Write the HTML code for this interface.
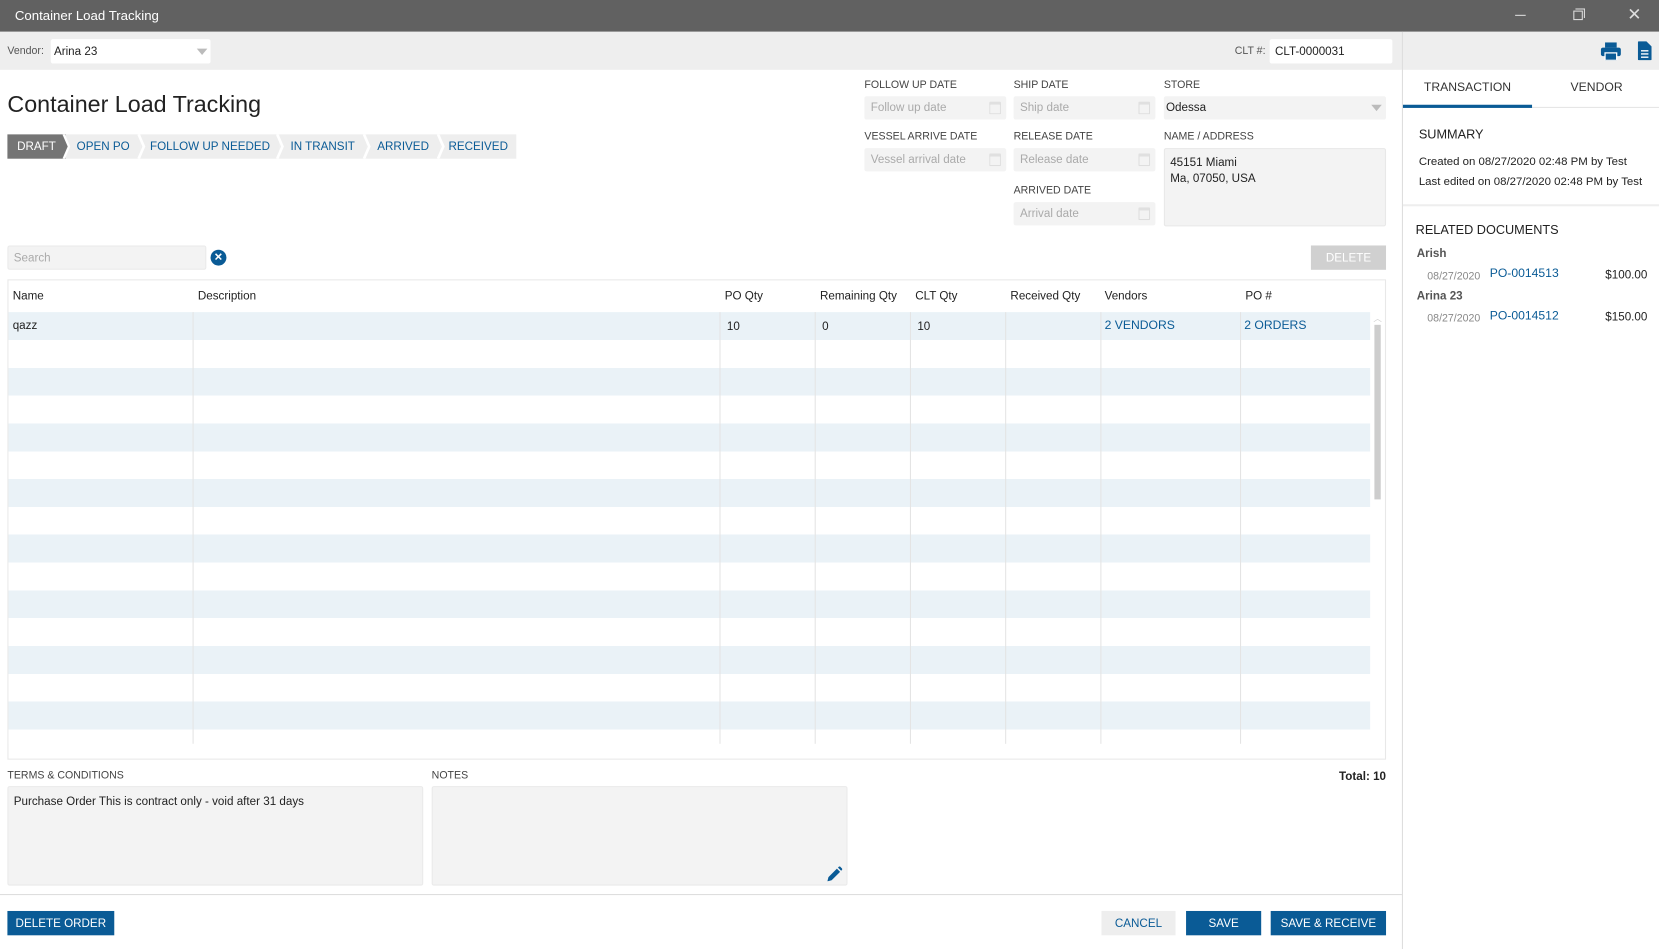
<!DOCTYPE html>
<html><head><meta charset="utf-8"><style>
*{box-sizing:border-box;margin:0;padding:0}
html,body{width:1659px;height:949px;overflow:hidden;background:#fff}
#w{position:absolute;left:0;top:0;width:1568px;height:897px;transform:scale(1.05804);transform-origin:0 0;font-family:"Liberation Sans",sans-serif;font-size:11px;color:#222}
.a{position:absolute}
.lbl{position:absolute;font-size:10px;color:#444}
.inp{position:absolute;background:#f3f3f3;border-radius:2px;color:#aaa;font-size:11px;padding-left:6px;line-height:23px}
.cal{position:absolute;right:5px;top:5px;width:11px;height:12px;border:1px solid #ddd;border-top:3px solid #e0e0e0;border-radius:1px}
.step{position:absolute;top:127px;height:23px;line-height:24px;background:#eee;color:#0a5b96;font-size:11px;text-align:center}
.btn{position:absolute;top:861px;height:23px;line-height:24px;text-align:center;font-size:11px;color:#fff;background:#0a5b96}
.vl{position:absolute;top:295px;height:408px;width:1px;background:#e4e4e4}
.th{position:absolute;top:274px;font-size:11px}
</style></head><body><div id="w">
<div class="a" style="left:0;top:0;width:1568px;height:30px;background:#616161"></div>
<div class="a" style="left:14px;top:8px;color:#fff;font-size:12.5px">Container Load Tracking</div>
<div class="a" style="left:1432px;top:14px;width:10px;height:1px;background:#ddd"></div>
<div class="a" style="left:1487px;top:10px;width:9px;height:9px;border:1px solid #ddd"></div>
<div class="a" style="left:1489px;top:8px;width:9px;height:9px;border-top:1px solid #ddd;border-right:1px solid #ddd"></div>
<div class="a" style="left:1538px;top:4px;color:#ddd;font-size:16px">✕</div>
<div class="a" style="left:0;top:30px;width:1568px;height:36px;background:#eee"></div>
<div class="a" style="left:7px;top:43px;font-size:10px;color:#555">Vendor:</div>
<div class="a" style="left:48px;top:37px;width:151px;height:23px;background:#fff;border-radius:2px;padding-left:3px;line-height:24px;font-size:11px">Arina 23</div>
<div class="a" style="left:186px;top:46px;border-left:5px solid transparent;border-right:5px solid transparent;border-top:6px solid #bbb"></div>
<div class="a" style="left:1167px;top:43px;font-size:10px;color:#555">CLT #:</div>
<div class="a" style="left:1200px;top:37px;width:116px;height:23px;background:#fff;border-radius:2px;padding-left:5px;line-height:24px;font-size:11px">CLT-0000031</div>
<svg class="a" style="left:1513px;top:40px" width="19" height="17" viewBox="0 0 19 17"><rect x="4" y="0" width="11" height="5" fill="#0a5b96"/><rect x="0" y="5" width="19" height="8" rx="2" fill="#0a5b96"/><rect x="4" y="10" width="11" height="7" fill="#0a5b96" stroke="#fff" stroke-width="1.2"/></svg>
<svg class="a" style="left:1548px;top:39px" width="13" height="18" viewBox="0 0 13 18"><path d="M0 1a1 1 0 0 1 1-1h7l5 5v12a1 1 0 0 1-1 1H1a1 1 0 0 1-1-1z" fill="#0a5b96"/><path d="M3 9h7M3 12h7M3 15h7" stroke="#fff" stroke-width="1.3"/></svg>
<div class="a" style="left:1325px;top:30px;width:1px;height:867px;background:#ddd"></div>
<div class="a" style="left:1326px;top:66px;width:242px;height:36px;border-bottom:1px solid #e4e4e4"></div>
<div class="a" style="left:1326px;top:77px;width:122px;text-align:center;font-size:11.5px;color:#333">TRANSACTION</div>
<div class="a" style="left:1448px;top:77px;width:122px;text-align:center;font-size:11.5px;color:#333">VENDOR</div>
<div class="a" style="left:1326px;top:99px;width:122px;height:3px;background:#0a5b96"></div>
<div class="a" style="left:1341px;top:120px;font-size:12px;color:#222">SUMMARY</div>
<div class="a" style="left:1341px;top:147px;font-size:10.8px;color:#222">Created on 08/27/2020 02:48 PM by Test</div>
<div class="a" style="left:1341px;top:166px;font-size:10.8px;color:#222">Last edited on 08/27/2020 02:48 PM by Test</div>
<div class="a" style="left:1326px;top:193px;width:242px;height:2px;background:#eee"></div>
<div class="a" style="left:1338px;top:210px;font-size:12px;color:#222">RELATED DOCUMENTS</div>
<div class="a" style="left:1339px;top:234px;font-size:11px;color:#555;font-weight:bold">Arish</div>
<div class="a" style="left:1349px;top:256px;font-size:10px;color:#888">08/27/2020</div>
<div class="a" style="left:1408px;top:253px;font-size:11.5px;color:#0a5b96">PO-0014513</div>
<div class="a" style="left:1480px;top:254px;width:77px;text-align:right;font-size:11px">$100.00</div>
<div class="a" style="left:1339px;top:274px;font-size:11px;color:#555;font-weight:bold">Arina 23</div>
<div class="a" style="left:1349px;top:296px;font-size:10px;color:#888">08/27/2020</div>
<div class="a" style="left:1408px;top:293px;font-size:11.5px;color:#0a5b96">PO-0014512</div>
<div class="a" style="left:1480px;top:294px;width:77px;text-align:right;font-size:11px">$150.00</div>
<div class="a" style="left:7px;top:86px;font-size:22px;color:#222">Container Load Tracking</div>
<div class="step" style="left:7px;width:55px;background:#757575;color:#fff">DRAFT</div>
<div class="step" style="left:62px;width:71px">OPEN PO</div>
<div class="step" style="left:133px;width:131px">FOLLOW UP NEEDED</div>
<div class="step" style="left:264px;width:82px">IN TRANSIT</div>
<div class="step" style="left:346px;width:70px">ARRIVED</div>
<div class="step" style="left:416px;width:72px">RECEIVED</div>
<svg class="a" style="left:0;top:127px" width="500" height="23"><g fill="none" stroke="#fff" stroke-width="2.5"><path d="M60 0l5 11.5-5 11.5M131 0l5 11.5-5 11.5M262 0l5 11.5-5 11.5M344 0l5 11.5-5 11.5M414 0l5 11.5-5 11.5"/></g><path d="M59 0l5 11.5-5 11.5z" fill="#757575"/></svg>
<div class="lbl" style="left:817px;top:75px">FOLLOW UP DATE</div>
<div class="inp" style="left:817px;top:91px;width:134px;height:22px">Follow up date<div class="cal"></div></div>
<div class="lbl" style="left:958px;top:75px">SHIP DATE</div>
<div class="inp" style="left:958px;top:91px;width:134px;height:22px">Ship date<div class="cal"></div></div>
<div class="lbl" style="left:1100px;top:75px">STORE</div>
<div class="inp" style="left:1100px;top:91px;width:210px;height:22px;color:#222;padding-left:2px">Odessa</div>
<div class="a" style="left:1296px;top:99px;border-left:5px solid transparent;border-right:5px solid transparent;border-top:6px solid #bbb"></div>
<div class="lbl" style="left:817px;top:124px">VESSEL ARRIVE DATE</div>
<div class="inp" style="left:817px;top:140px;width:134px;height:22px">Vessel arrival date<div class="cal"></div></div>
<div class="lbl" style="left:958px;top:124px">RELEASE DATE</div>
<div class="inp" style="left:958px;top:140px;width:134px;height:22px">Release date<div class="cal"></div></div>
<div class="lbl" style="left:1100px;top:124px">NAME / ADDRESS</div>
<div class="inp" style="left:1100px;top:140px;width:210px;height:74px;color:#222;line-height:15px;padding-top:6px;padding-left:5px;border:1px solid #e8e8e8">45151 Miami<br>Ma, 07050, USA</div>
<div class="lbl" style="left:958px;top:175px">ARRIVED DATE</div>
<div class="inp" style="left:958px;top:191px;width:134px;height:22px">Arrival date<div class="cal"></div></div>
<div class="inp" style="left:7px;top:232px;width:188px;height:23px;line-height:23px;border:1px solid #eaeaea;padding-left:5px">Search</div>
<div class="a" style="left:199px;top:236px;width:15px;height:15px;border-radius:50%;background:#0a5b96;color:#fff;font-size:10px;line-height:15px;text-align:center;font-weight:bold">✕</div>
<div class="a" style="left:1239px;top:232px;width:71px;height:23px;line-height:24px;background:#d0d0d0;color:#fff;text-align:center;font-size:11px">DELETE</div>
<div class="a" style="left:7px;top:264px;width:1303px;height:454px;border:1px solid #e8e8e8"></div>
<div class="th" style="left:12px">Name</div><div class="th" style="left:187px">Description</div><div class="th" style="left:685px">PO Qty</div><div class="th" style="left:775px">Remaining Qty</div><div class="th" style="left:865px">CLT Qty</div><div class="th" style="left:955px">Received Qty</div><div class="th" style="left:1044px">Vendors</div><div class="th" style="left:1177px">PO #</div>
<div class="a" style="left:8px;top:295px;width:1287px;height:408px;background:repeating-linear-gradient(#eaf2f7 0,#eaf2f7 26.3px,#fff 26.3px,#fff 52.6px)"></div>
<div class="vl" style="left:182px"></div><div class="vl" style="left:680px"></div><div class="vl" style="left:770px"></div><div class="vl" style="left:860px"></div><div class="vl" style="left:950px"></div><div class="vl" style="left:1040px"></div><div class="vl" style="left:1172px"></div>
<div class="a" style="left:12px;top:302px;font-size:11px">qazz</div>
<div class="a" style="left:687px;top:303px;font-size:11px">10</div>
<div class="a" style="left:777px;top:303px;font-size:11px">0</div>
<div class="a" style="left:867px;top:303px;font-size:11px">10</div>
<div class="a" style="left:1044px;top:302px;font-size:11.5px;color:#0a5b96">2 VENDORS</div>
<div class="a" style="left:1176px;top:302px;font-size:11.5px;color:#0a5b96">2 ORDERS</div>
<div class="a" style="left:1299px;top:307px;width:6px;height:165px;background:#cdcdcd"></div>
<div class="a" style="left:1298px;top:296px;font-size:8px;color:#ccc">︿</div>
<div class="lbl" style="left:7px;top:728px">TERMS &amp; CONDITIONS</div>
<div class="a" style="left:7px;top:743px;width:393px;height:94px;background:#f3f3f3;border:1px solid #eaeaea;border-radius:2px;padding:8px 5px;font-size:11px">Purchase Order This is contract only - void after 31 days</div>
<div class="lbl" style="left:408px;top:728px">NOTES</div>
<div class="a" style="left:408px;top:743px;width:393px;height:94px;background:#f3f3f3;border:1px solid #eaeaea;border-radius:2px"></div>
<svg class="a" style="left:782px;top:819px" width="14" height="14" viewBox="0 0 14 14"><path d="M0 14l1-4 8-8 3 3-8 8z M10 1l1.5-1.5 3 3L13 4z" fill="#0a5b96"/></svg>
<div class="a" style="left:1210px;top:728px;width:100px;text-align:right;font-size:11px;font-weight:bold">Total: 10</div>
<div class="a" style="left:0;top:845px;width:1325px;height:1px;background:#ddd"></div>
<div class="btn" style="left:7px;width:101px">DELETE ORDER</div>
<div class="btn" style="left:1041px;width:70px;background:#eee;color:#0a5b96">CANCEL</div>
<div class="btn" style="left:1121px;width:71px">SAVE</div>
<div class="btn" style="left:1201px;width:109px">SAVE &amp; RECEIVE</div>
</div></body></html>
